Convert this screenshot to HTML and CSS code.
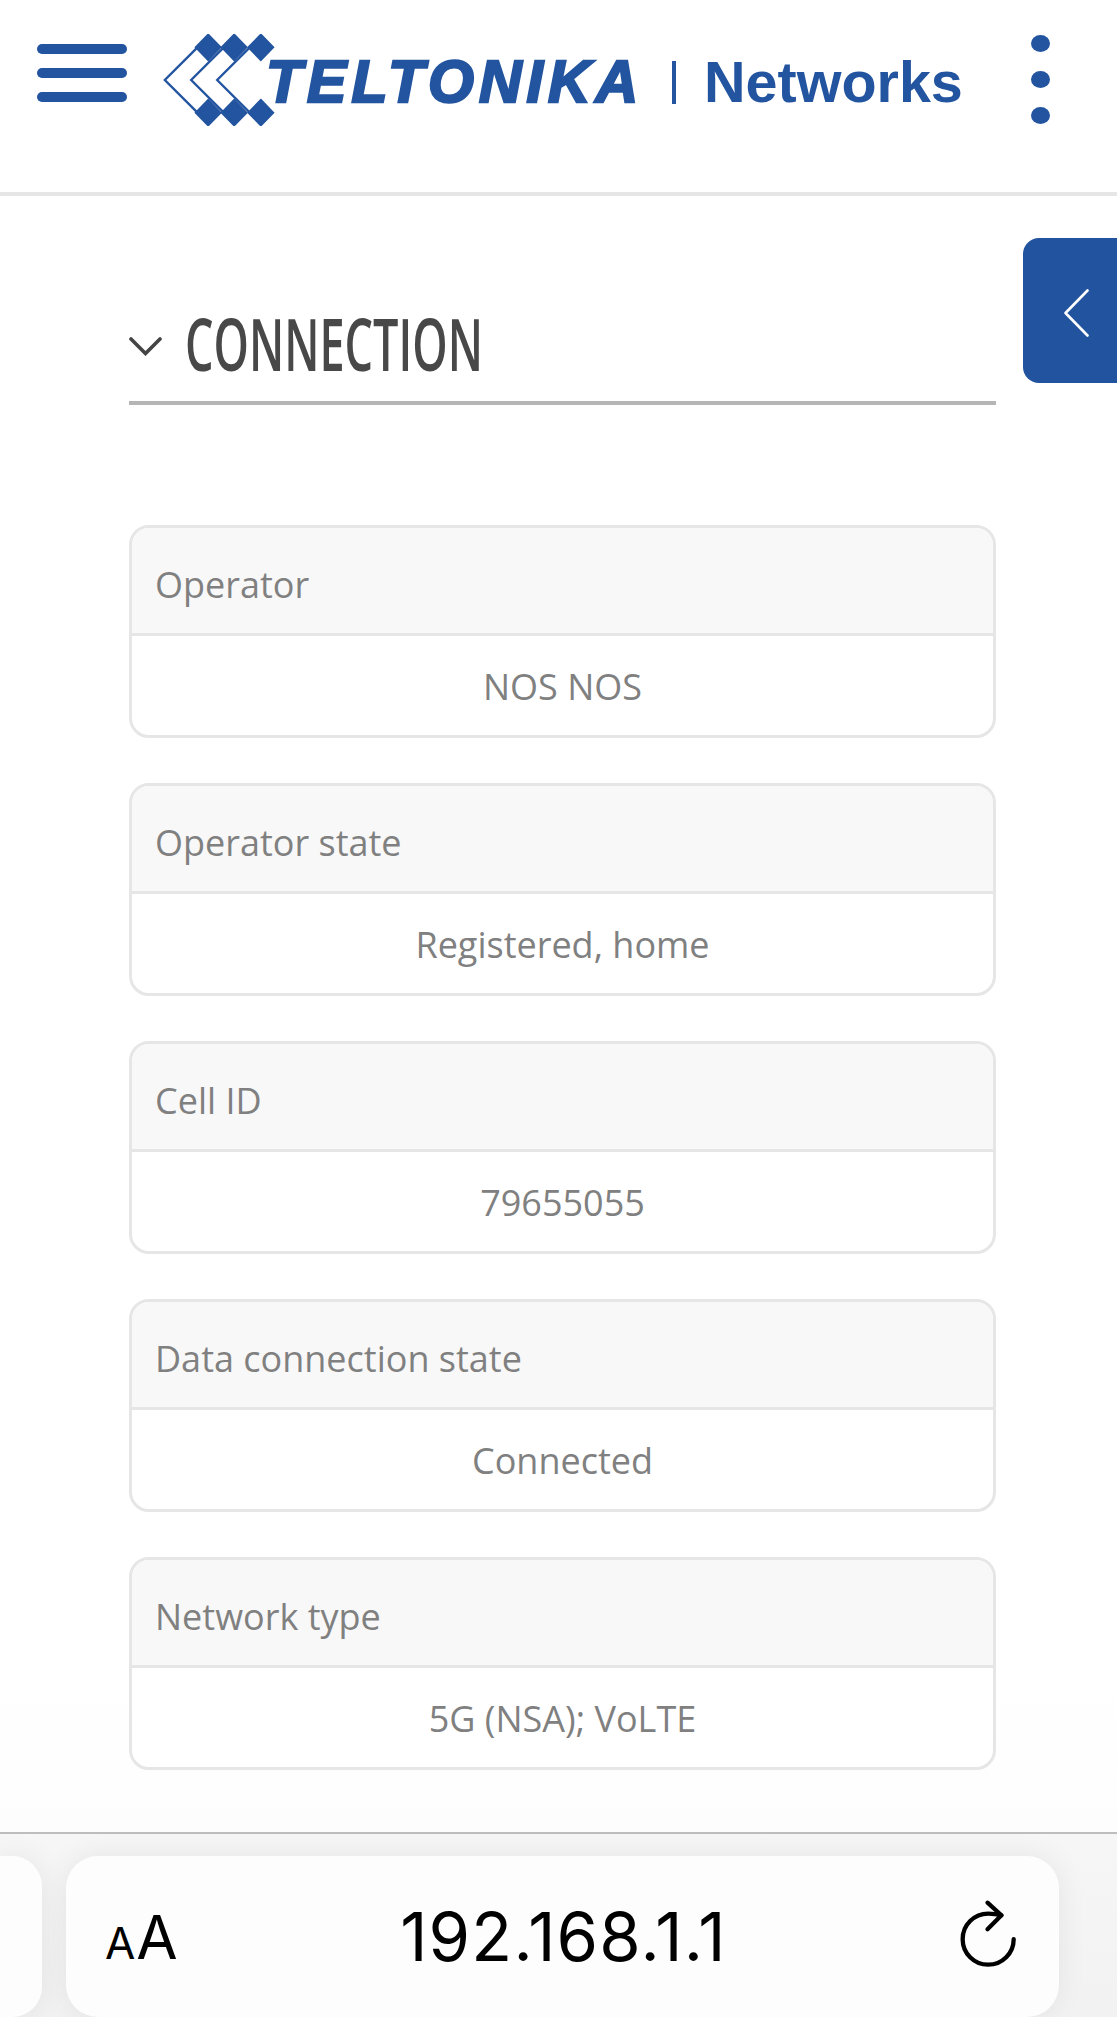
FILE: index.html
```html
<!DOCTYPE html>
<html lang="en">
<head>
<meta charset="utf-8">
<title>Teltonika Networks</title>
<link rel="stylesheet" href="styles.css">
</head>
<body>
<div class="page">
  <header class="topbar">
    <button class="burger" aria-label="Menu"><i></i><i></i><i></i></button>
    <div class="logo">
      <svg class="logo-mark" viewBox="40 42 335 276" aria-hidden="true">
        <g class="mark-fill">
          <polygon points="175,46 210,82 175,118 140,82"/>
          <polygon points="253,46 288,82 253,118 218,82"/>
          <polygon points="333,46 368,82 333,118 298,82"/>
          <polygon points="175,242 210,278 175,314 140,278"/>
          <polygon points="253,242 288,278 253,314 218,278"/>
          <polygon points="333,242 368,278 333,314 298,278"/>
        </g>
        <g class="mark-line">
          <polyline points="143,82 45,180 143,278"/>
          <polyline points="222,82 124,180 222,278"/>
          <polyline points="300,82 202,180 300,278"/>
        </g>
      </svg>
      <span class="brand">TELTONIKA</span>
      <span class="brand-sep"></span>
      <span class="brand-sub">Networks</span>
    </div>
    <button class="kebab" aria-label="More"><i></i><i></i><i></i></button>
  </header>

  <main class="content">
    <button class="side-tab" aria-label="Open panel">
      <svg viewBox="0 0 25 48" aria-hidden="true"><polyline points="23.5,1.5 1.5,24 23.5,46.5"/></svg>
    </button>

    <div class="section-head">
      <svg class="section-chevron" viewBox="0 0 33 19" aria-hidden="true"><polyline points="2,2 16.5,16.5 31,2"/></svg>
      <h2 class="section-title">CONNECTION</h2>
    </div>

    <div class="cards">
      <section class="card"><h3 class="card-label">Operator</h3><p class="card-value">NOS NOS</p></section>
      <section class="card"><h3 class="card-label">Operator state</h3><p class="card-value">Registered, home</p></section>
      <section class="card"><h3 class="card-label">Cell ID</h3><p class="card-value">79655055</p></section>
      <section class="card"><h3 class="card-label">Data connection state</h3><p class="card-value">Connected</p></section>
      <section class="card"><h3 class="card-label">Network type</h3><p class="card-value">5G (NSA); VoLTE</p></section>
    </div>
  </main>

  <footer class="browser-bar">
    <div class="tab-peek"></div>
    <div class="url-pill">
      <span class="aa"><span class="aa-small">A</span><span class="aa-big">A</span></span>
      <span class="url">192.168.1.1</span>
      <svg class="reload" viewBox="60 40 172 206" aria-hidden="true">
        <path d="M185 88 Q165 83 145 83 A77 77 0 1 0 222 160"/>
        <polyline points="143,50 185,88 143,130"/>
      </svg>
    </div>
  </footer>
</div>
</body>
</html>
```
FILE: styles.css
```css
* { box-sizing: border-box; }
html, body { margin: 0; padding: 0; background: #fff; }
.page {
  width: 1117px;
  height: 2017px;
  overflow: hidden;
  display: flex;
  flex-direction: column;
  font-family: "Open Sans", "Liberation Sans", sans-serif;
}

/* top bar */
.topbar {
  height: 196px;
  flex: none;
  border-bottom: 4px solid #e6e6e6;
  display: flex;
  align-items: flex-start;
  padding: 34px 67px 0 37px;
}
.burger, .kebab, .side-tab {
  border: 0;
  padding: 0;
  background: none;
}
.burger {
  width: 90px;
  margin-top: 10px;
  display: flex;
  flex-direction: column;
  gap: 14px;
}
.burger i {
  display: block;
  height: 10px;
  border-radius: 5px;
  background: #23549f;
}
.logo {
  margin-left: 36px;
  display: flex;
  align-items: flex-start;
}
.logo-mark { width: 112px; height: 92px; flex: none; }
.mark-fill polygon { fill: #23549f; stroke: #23549f; stroke-width: 9; stroke-linejoin: miter; }
.mark-line polyline { fill: none; stroke: #23549f; stroke-width: 7; }
.brand {
  margin: 15px 0 0 -9px;
  width: 371px;
  font: italic 700 59px/66px "Liberation Sans", Arial, sans-serif;
  letter-spacing: 5px;
  color: #23549f;
  -webkit-text-stroke: 2.4px #23549f;
  white-space: nowrap;
}
.brand-sep {
  width: 4px;
  height: 43px;
  margin: 27px 0 0 35px;
  background: #23549f;
}
.brand-sub {
  margin: 15px 0 0 28px;
  font: 700 57.5px/66px "Liberation Sans", Arial, sans-serif;
  color: #23549f;
  white-space: nowrap;
}
.kebab {
  margin-left: auto;
  width: 19px;
  margin-top: 1px;
  display: flex;
  flex-direction: column;
  gap: 19px;
}
.kebab i {
  display: block;
  width: 19px;
  height: 17px;
  border-radius: 50%;
  background: #23549f;
}

/* content */
.content {
  position: relative;
  flex: 1;
  min-height: 0;
  padding: 0 121px 0 129px;
  background: linear-gradient(#fff 90%, #fdfdfd);
}
.side-tab {
  position: absolute;
  top: 42px;
  right: 0;
  width: 94px;
  height: 145px;
  border-radius: 16px 0 0 16px;
  background: #22539f;
  display: flex;
  align-items: center;
  padding: 5px 0 0 41px;
}
.side-tab svg { width: 25px; height: 48px; }
.side-tab polyline { fill: none; stroke: #fff; stroke-width: 2.6; stroke-linecap: round; stroke-linejoin: round; }
.section-head {
  height: 209px;
  border-bottom: 4px solid #b5b5b5;
  padding-top: 99px;
  display: flex;
  align-items: flex-start;
}
.section-chevron { width: 33px; height: 19px; margin-top: 42px; flex: none; }
.section-chevron polyline { fill: none; stroke: #444; stroke-width: 3.6; stroke-linecap: round; }
.section-title {
  margin: 0 0 0 23px;
  width: 291px;
  font-size: 72px;
  font-weight: 600;
  line-height: 96px;
  color: #484848;
  white-space: nowrap;
  transform: scaleX(0.625);
  transform-origin: left center;
}
.cards {
  margin-top: 120px;
  display: flex;
  flex-direction: column;
  gap: 45px;
}
.card {
  height: 213px;
  border: 3px solid #e6e6e6;
  border-radius: 20px;
  overflow: hidden;
  background: #fff;
}
.card-label {
  margin: 0;
  height: 108px;
  border-bottom: 3px solid #e6e6e6;
  background: #f8f8f8;
  padding: 34px 0 0 23px;
  font-size: 36px;
  font-weight: 400;
  line-height: 46px;
  color: #808080;
}
.card-value {
  margin: 0;
  padding-top: 28px;
  text-align: center;
  font-size: 36px;
  line-height: 46px;
  color: #808080;
}

/* browser bar */
.browser-bar {
  height: 185px;
  flex: none;
  border-top: 2px solid #bdbdbd;
  background: linear-gradient(#f6f6f6, #f2f2f2);
  padding-top: 22px;
  display: flex;
  gap: 24px;
}
.tab-peek {
  width: 42px;
  flex: none;
  height: 161px;
  border-radius: 0 30px 30px 0;
  background: #fdfdfd;
  box-shadow: 0 0 30px rgba(0, 0, 0, .07);
}
.url-pill {
  width: 993px;
  flex: none;
  height: 161px;
  border-radius: 32px;
  background: #fdfdfd;
  box-shadow: 0 0 30px rgba(0, 0, 0, .07);
  display: grid;
  grid-template-columns: 1fr auto 1fr;
  align-items: center;
  padding: 0 42px 0 39px;
}
.aa {
  font-family: Inter, "Liberation Sans", sans-serif;
  font-weight: 400;
  color: #000;
  display: flex;
  align-items: baseline;
  line-height: 1;
}
.aa-small { font-size: 44px; }
.aa-big { font-size: 60px; margin-left: 1px; }
.url {
  font-family: Inter, "Liberation Sans", sans-serif;
  font-size: 67px;
  color: #000;
  letter-spacing: 1.2px;
  margin-left: 5px;
}
.reload {
  width: 57px;
  height: 69px;
  justify-self: end;
  margin-bottom: 6px;
}
.reload path, .reload polyline { fill: none; stroke: #000; stroke-width: 13; stroke-linecap: round; stroke-linejoin: round; }
```
